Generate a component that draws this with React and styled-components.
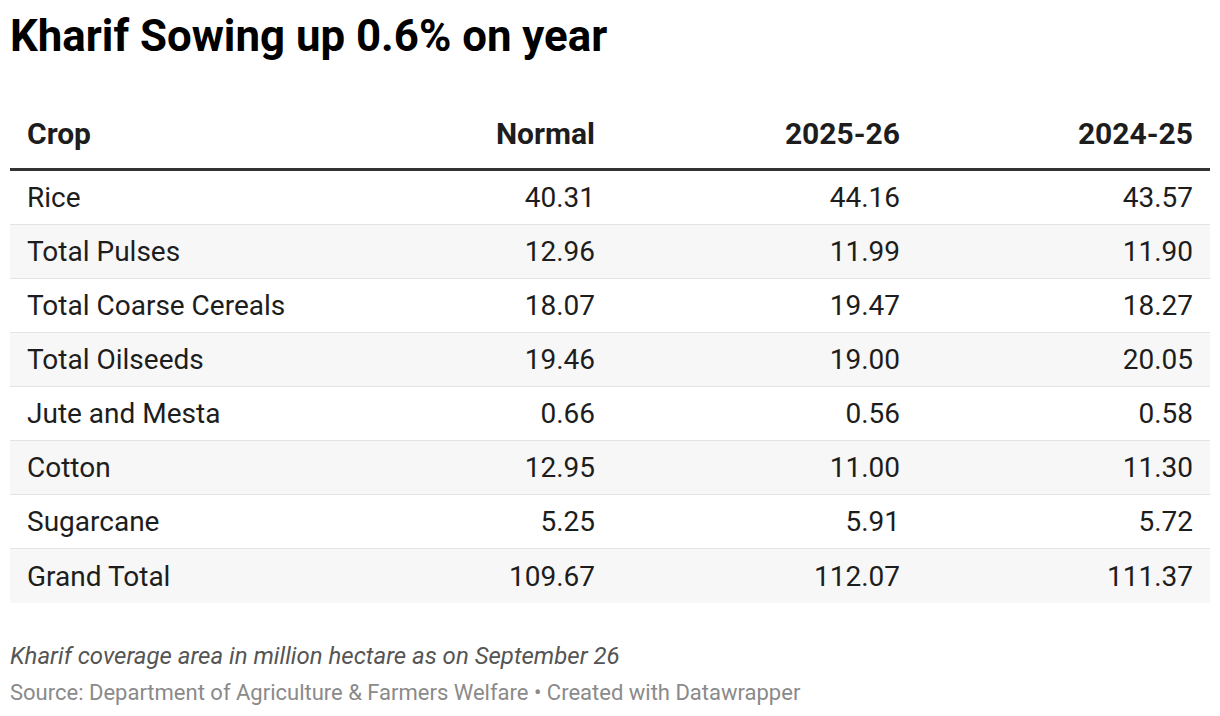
import React from 'react'
import styled, { createGlobalStyle } from 'styled-components'

const GlobalStyle = createGlobalStyle`
  body {
    margin: 0;
    background: #ffffff;
    font-family: Roboto, "Liberation Sans", sans-serif;
    color: #181818;
  }
`;

const Container = styled.div`
  width: 1220px;
  height: 716px;
  padding: 10px 10px 0 10px;
  box-sizing: border-box;
`;

const Title = styled.h1`
  margin: 0;
  font-size: 43.8px;
  font-weight: 700;
  line-height: 52px;
  color: #000;
`;

const Table = styled.div`
  margin-top: 48px;
  display: grid;
  grid-template-columns: 300px 302px 305px 293px;
`;

const Head = styled.div`
  display: contents;
`;

const HeadCell = styled.div`
  font-size: 30px;
  font-weight: 700;
  padding: 0 17px 11px 17px;
  height: 61px;
  box-sizing: border-box;
  display: flex;
  align-items: center;
  justify-content: ${(p) => (p.$left ? 'flex-start' : 'flex-end')};
  border-bottom: 3px solid #333;
  color: #1d1d1d;
`;

const Cell = styled.div`
  font-size: 28px;
  padding: 0 17px;
  display: flex;
  align-items: center;
  justify-content: ${(p) => (p.$left ? 'flex-start' : 'flex-end')};
  background: ${(p) => (p.$shaded ? '#f7f7f7' : '#fff')};
  border-bottom: ${(p) => (p.$last ? 'none' : '1px solid #e3e3e3')};
  height: ${(p) => (p.$last ? '54px' : '53px')};
  color: #1d1d1d;
`;

const Notes = styled.div`
  margin-top: 37px;
`;

const Note = styled.div`
  font-size: 24px;
  font-style: italic;
  color: #555;
  line-height: 32px;
`;

const Source = styled.div`
  font-size: 22px;
  color: #8a8a8a;
  line-height: 42px;
`;

const rows = [
  ['Rice', '40.31', '44.16', '43.57'],
  ['Total Pulses', '12.96', '11.99', '11.90'],
  ['Total Coarse Cereals', '18.07', '19.47', '18.27'],
  ['Total Oilseeds', '19.46', '19.00', '20.05'],
  ['Jute and Mesta', '0.66', '0.56', '0.58'],
  ['Cotton', '12.95', '11.00', '11.30'],
  ['Sugarcane', '5.25', '5.91', '5.72'],
  ['Grand Total', '109.67', '112.07', '111.37'],
];

const App = () => {
  return (
    <Container>
      <GlobalStyle />
      <Title>Kharif Sowing up 0.6% on year</Title>
      <Table>
        <Head>
          <HeadCell $left>Crop</HeadCell>
          <HeadCell>Normal</HeadCell>
          <HeadCell>2025-26</HeadCell>
          <HeadCell>2024-25</HeadCell>
        </Head>
        {rows.map((r, i) =>
          r.map((v, j) => (
            <Cell
              key={i + '-' + j}
              $left={j === 0}
              $shaded={i % 2 === 1}
              $last={i === rows.length - 1}
            >
              {v}
            </Cell>
          ))
        )}
      </Table>
      <Notes>
        <Note>Kharif coverage area in million hectare as on September 26</Note>
        <Source>Source: Department of Agriculture &amp; Farmers Welfare • Created with Datawrapper</Source>
      </Notes>
    </Container>
  )
}

export default App
